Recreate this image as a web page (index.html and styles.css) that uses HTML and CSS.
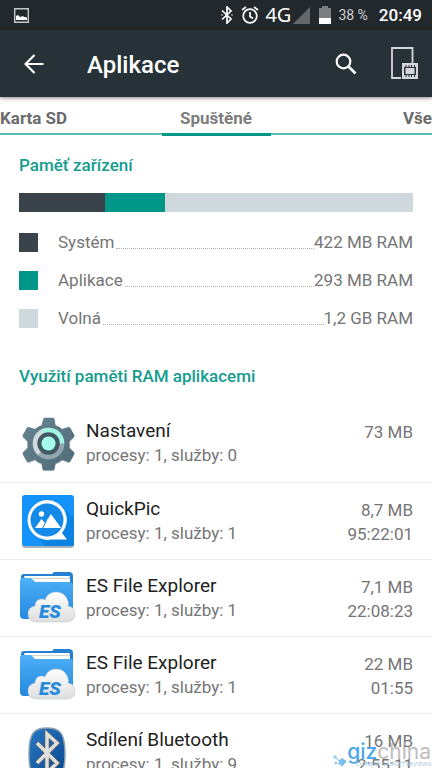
FILE: index.html
```html
<!DOCTYPE html>
<html lang="cs">
<head>
<meta charset="utf-8">
<meta name="viewport" content="width=device-width, initial-scale=1">
<title>Aplikace</title>
<link rel="stylesheet" href="styles.css">
</head>
<body>
<svg class="defs" width="0" height="0" aria-hidden="true">
  <defs>
    <linearGradient id="folder" x1="0" y1="0" x2="0" y2="1"><stop offset="0" stop-color="#4eb0f7"/><stop offset="1" stop-color="#2388e0"/></linearGradient>
    <linearGradient id="cloud" x1="0" y1="0" x2="0" y2="1"><stop offset="0" stop-color="#ffffff"/><stop offset="1" stop-color="#dedede"/></linearGradient>
    <linearGradient id="gear" x1="0" y1="0" x2="1" y2="1"><stop offset="0" stop-color="#668391"/><stop offset="1" stop-color="#506b78"/></linearGradient>
    <linearGradient id="btblue" x1="0" y1="0" x2="1" y2="1"><stop offset="0" stop-color="#2878c4"/><stop offset="1" stop-color="#07468c"/></linearGradient>
    <symbol id="es" viewBox="0 0 60 56">
      <path d="M2 12V6q0-3 3-3h28l2-2h15q4 0 4 4v10z" fill="#2480d2"/>
      <path d="M5 5h46v9H5z" fill="#d0d3d2"/><path d="M6 5h44v2H6zM7 8h44v3H7z" fill="#fff"/>
      <path d="M1 10q0-3 3-3h7q2 0 3 2l2 2h35q3 0 3 4v30q0 3-4 3H5q-4 0-4-4z" fill="url(#folder)"/>
      <path d="M18 51q-9 0-9-8 0-7 7-8 0-6 6-7 3 0 4 1 3-8 11-8 9 0 12 9 1 3 0 5 7 1 7 8 0 8-9 8z" fill="url(#cloud)" stroke="#b9c5ce" stroke-width=".5"/>
      <text x="20" y="47" class="es-mark">ES</text>
    </symbol>
  </defs>
</svg>
<div class="app">
  <div class="status">
    <svg class="status-photo" width="15" height="15" viewBox="0 0 15 15"><path d="M.7.7h13.6v13.6H.7z" fill="none" stroke="#c4c7c8" stroke-width="1.4"/><path d="M2 12V8l2-1 2 2 3-1 1 1h2l1 1v2z" fill="#fff"/></svg>
    <svg class="status-bt" width="12" height="18" viewBox="0 0 12 18"><path d="M1 4.500l9 8.500-4 4V1l4 4-9 8.500M.5 9h1M10.500 9h1" fill="none" stroke="#fff" stroke-width="1.700"/></svg>
    <svg class="status-alarm" width="18" height="18" viewBox="0 0 18 18" fill="none" stroke="#fff" stroke-width="1.700"><circle cx="9" cy="10" r="6.800"/><path d="M9 6v4.500l3 2M1 4l4-3M17 4l-4-3"/></svg>
    <span class="network">4G</span>
    <svg class="status-signal" width="17" height="17" viewBox="0 0 17 17"><path d="M17 0v17H0z" fill="#64686a"/></svg>
    <svg class="status-battery" width="12" height="18" viewBox="0 0 12 18"><path d="M3 0h6v2h3v10H0V2h3z" fill="#7b7f81"/><path d="M0 12h12v6H0z" fill="#fff"/></svg>
    <span class="percent">38 %</span>
    <time class="clock">20:49</time>
  </div>
  <header class="appbar">
    <button class="icon-button" aria-label="Zpět"><svg width="20" height="20" viewBox="0 0 20 20"><path d="M19.500 10H2M10.500 1L1.500 10l9 9" fill="none" stroke="#fff" stroke-width="2.200"/></svg></button>
    <h1>Aplikace</h1>
    <button class="icon-button search" aria-label="Hledat"><svg width="22" height="22" viewBox="0 0 22 22" fill="none" stroke="#fff"><circle cx="8.500" cy="8.500" r="6.800" stroke-width="2.200"/><path d="M13.500 13.500l7 7" stroke-width="2.700"/></svg></button>
    <button class="icon-button" aria-label="Paměť"><svg width="28" height="33" viewBox="0 0 28 33"><path d="M21.500 16V1H1v30h9" fill="none" stroke="#d5d7d8" stroke-width="1.800"/><path d="M11 16h16v16H11z" fill="#d5d7d8"/><path d="M15 18v12M18 18v12M20.500 18v12M23.500 18v12" stroke="#263238" stroke-width="1"/><path d="M13 20h12v8H13z" fill="#263238"/><path d="M14.500 21h9v6h-9z" fill="#d5d7d8"/></svg></button>
  </header>
  <nav class="tabs">
    <a class="tab" href="#sd">Karta SD</a>
    <a class="tab active" href="#running" aria-current="page">Spuštěné</a>
    <a class="tab" href="#all">Vše</a>
  </nav>
  <main>
    <section class="memory">
      <h2>Paměť zařízení</h2>
      <div class="bar"><span class="system"></span><span class="apps"></span><span class="free"></span></div>
      <dl>
        <div class="entry"><dt><i class="system"></i>Systém</dt><dd>422 MB RAM</dd></div>
        <div class="entry"><dt><i class="apps"></i>Aplikace</dt><dd>293 MB RAM</dd></div>
        <div class="entry"><dt><i class="free"></i>Volná</dt><dd>1,2 GB RAM</dd></div>
      </dl>
      <h2>Využití paměti RAM aplikacemi</h2>
    </section>
    <ul class="list">
      <li>
        <svg class="app-icon" viewBox="-3 -1 64 60">
          <path d="M23 2q0-1 1-1h9q2 0 2 2l1 6q4 1 7 4l6-2q2-1 3 1l4 7q1 2-1 3l-4 4v7l4 4q2 1 1 3l-4 7q-1 2-3 1l-6-2q-3 3-7 4l-1 5q0 2-2 2h-9q-2 0-2-2l-1-5q-4-1-7-4l-6 2q-2 1-3-1l-4-7q-1-2 1-3l4-4v-7l-4-4q-2-1-1-3l4-7q1-2 3-1l6 2q3-3 7-4z" fill="#b8bec1" transform="translate(0 1)"/>
          <path d="M23 2q0-1 1-1h9q2 0 2 2l1 6q4 1 7 4l6-2q2-1 3 1l4 7q1 2-1 3l-4 4v7l4 4q2 1 1 3l-4 7q-1 2-3 1l-6-2q-3 3-7 4l-1 5q0 2-2 2h-9q-2 0-2-2l-1-5q-4-1-7-4l-6 2q-2 1-3-1l-4-7q-1-2 1-3l4-4v-7l-4-4q-2-1-1-3l4-7q1-2 3-1l6 2q3-3 7-4z" fill="url(#gear)"/>
          <circle cx="28.500" cy="28.500" r="17" fill="#91a6b0"/>
          <path d="M28.500 11.500A17 17 0 0 0 17 41l4-4.500A11 11 0 0 1 23 19z" fill="#d0d9dd"/>
          <path d="M21 13.300A17 17 0 0 1 45.500 28.500H39A11 11 0 0 0 23 19z" fill="#a0f5e3"/>
          <circle cx="28.500" cy="28.500" r="12" fill="#435962"/><circle cx="28.500" cy="28.500" r="7.500" fill="#a5ffeb"/>
        </svg>
        <div class="names"><h3>Nastavení</h3><p>procesy: 1, služby: 0</p></div>
        <div class="usage"><span>73 MB</span></div>
      </li>
      <li>
        <svg class="app-icon" viewBox="0 0 60 56">
          <rect x="3" y="2" width="52" height="52" rx="3" fill="#a9b2b8"/><rect x="3" y="1" width="52" height="51" rx="3" fill="#1493fa"/>
          <path d="M42 12l13 12v26q0 2-2 2H26L17 39z" fill="#0c83e2"/>
          <path d="M28 6a20 20 0 1 0 5 39.500h15L43 39A20 20 0 0 0 28 6z" fill="#fff"/>
          <circle cx="28" cy="26" r="16.500" fill="#1489e8"/>
          <circle cx="22.500" cy="20" r="2.700" fill="#fff"/><path d="M16 34l6.500-9 3.500 4 6-9 10 14z" fill="#fff"/><path d="M23.500 34l4-7" stroke="#1489e8"/>
        </svg>
        <div class="names"><h3>QuickPic</h3><p>procesy: 1, služby: 1</p></div>
        <div class="usage"><span>8,7 MB</span><span>95:22:01</span></div>
      </li>
      <li>
        <svg class="app-icon"><use href="#es"/></svg>
        <div class="names"><h3>ES File Explorer</h3><p>procesy: 1, služby: 1</p></div>
        <div class="usage"><span>7,1 MB</span><span>22:08:23</span></div>
      </li>
      <li>
        <svg class="app-icon"><use href="#es"/></svg>
        <div class="names"><h3>ES File Explorer</h3><p>procesy: 1, služby: 1</p></div>
        <div class="usage"><span>22 MB</span><span>01:55</span></div>
      </li>
      <li>
        <svg class="app-icon" viewBox="0 0 60 56">
          <path d="M28 3c13 0 18 5 18 26s-5 26-18 26S10 50 10 29 15 3 28 3z" fill="url(#btblue)" stroke="#8aa0b3" stroke-width="1.500"/>
          <path d="M18 18l20 20-10 10V9l10 9-20 20" fill="none" stroke="#575f66" stroke-width="5"/>
          <path d="M18 18l20 20-10 10V9l10 9-20 20" fill="none" stroke="#dededb" stroke-width="3.500"/>
        </svg>
        <div class="names"><h3>Sdílení Bluetooth</h3><p>procesy: 1, služby: 9</p></div>
        <div class="usage"><span>16 MB</span><span>2:55:11</span></div>
      </li>
    </ul>
  </main>
  <div class="watermark">
    <svg width="14" height="12" viewBox="0 0 14 12" fill="none" stroke="#76bdf0"><path d="M3 3l3 3 4-3M5 8l4 3 4-5M6 6l3 2"/><circle cx="2" cy="2" r="1.200"/><circle cx="3" cy="8" r="1"/><path d="M9 4l4 2-3 4-4-2z" fill="#76bdf0"/></svg>
    <div><strong><b>giz</b>china</strong><small>CHINESE GADGET REVIEWS</small></div>
  </div>
</div>
</body>
</html>
```
FILE: styles.css
```css
* {
  box-sizing: border-box;
}

body,
h1,
h2,
h3,
p,
dl,
dd,
ul {
  margin: 0;
  padding: 0;
}

body {
  background: #fff;
  color: #757575;
  font: 17px/24px Roboto, "Liberation Sans", sans-serif;
}

.defs {
  position: absolute;
}

.app {
  position: relative;
  display: flex;
  flex-direction: column;
  height: 100vh;
  overflow: hidden;
}

.status {
  display: flex;
  flex: none;
  align-items: center;
  height: 30px;
  padding: 0 10px 0 14px;
  background: #22282b;
  color: #fff;
}

.status-photo {
  margin-right: auto;
}

.status-alarm {
  margin: 0 6px 0 8px;
}

.network {
  font: 20px/30px "Noto Sans", sans-serif;
}

.status-signal {
  margin: 0 9px 0 2px;
}

.percent {
  margin: 0 11px 0 7px;
  color: #d0d2d3;
  font-size: 14px;
}

.clock {
  font-size: 17px;
  font-weight: 500;
}

.appbar {
  position: relative;
  display: flex;
  flex: none;
  align-items: center;
  height: 67px;
  padding: 0 13px 0 24px;
  background: #263238;
  box-shadow: 0 1px 4px rgba(0, 0, 0, 0.5);
  color: #fff;
}

.icon-button {
  display: flex;
  padding: 0;
  border: 0;
  background: none;
}

h1 {
  flex: 1;
  margin-left: 43px;
  padding-top: 2px;
  font-size: 24px;
  font-weight: 500;
  line-height: 28px;
}

.search {
  margin-right: 34px;
}

.tabs {
  display: grid;
  flex: none;
  grid-template-columns: 1fr 109px 1fr;
  height: 38px;
  background: linear-gradient(#59bdb3, #59bdb3) bottom / 100% 2px no-repeat;
}

.tab {
  padding-top: 6px;
  border-bottom: 3px solid transparent;
  color: #6b6b6b;
  font-size: 17px;
  font-weight: 700;
  line-height: 30px;
  text-align: center;
  text-decoration: none;
}

.tab:first-child {
  text-align: left;
}

.tab:last-child {
  text-align: right;
}

.tab.active {
  border-color: #009688;
  color: #7d7d7d;
}

.memory {
  padding: 18px 19px 0;
}

h2 {
  color: #159c8f;
  font-size: 17px;
  font-weight: 500;
  line-height: 24px;
}

.bar {
  display: grid;
  grid-template-columns: 86fr 60fr 248fr;
  height: 19px;
  margin: 16px 0 11px;
}

.system {
  background: #3a434b;
}

.apps {
  background: #009688;
}

.free {
  background: #cfd8dc;
}

dl {
  margin-bottom: 27px;
}

.entry {
  display: flex;
  align-items: center;
  height: 38px;
  line-height: 20px;
}

.entry::after {
  flex: 1;
  order: 1;
  height: 12px;
  margin-left: 2px;
  border-bottom: 1px dotted #aaa;
  content: "";
}

dt {
  display: flex;
  align-items: center;
}

dt i {
  width: 19px;
  height: 19px;
  margin-right: 20px;
}

dd {
  order: 2;
}

.list {
  margin-top: 17px;
  list-style: none;
}

.list li {
  display: flex;
  height: 77px;
  padding: 11px 19px 0;
}

.list li + li {
  border-top: 1px solid #ececec;
}

.app-icon {
  flex: none;
  width: 60px;
  height: 56px;
  margin-right: 7px;
}

.es-mark {
  fill: #258bdd;
  font: italic 900 19px Roboto, sans-serif;
}

.names {
  flex: 1;
  padding-top: 1px;
}

h3 {
  color: #212121;
  font-size: 19px;
  font-weight: 400;
  line-height: 28px;
}

.names p {
  line-height: 20px;
}

.usage {
  display: flex;
  flex-direction: column;
  padding-top: 4px;
  text-align: right;
}

.watermark {
  position: absolute;
  right: 1px;
  bottom: 1px;
  display: flex;
  align-items: flex-end;
  color: #bdbdbd;
}

.watermark strong,
.watermark small {
  display: block;
}

.watermark strong {
  font: 21px/18px Inter, sans-serif;
}

.watermark b {
  color: #48a9ee;
  font-weight: 500;
}

.watermark small {
  color: #a8c9df;
  font: 6px/6px Roboto, sans-serif;
  text-align: right;
}
```
